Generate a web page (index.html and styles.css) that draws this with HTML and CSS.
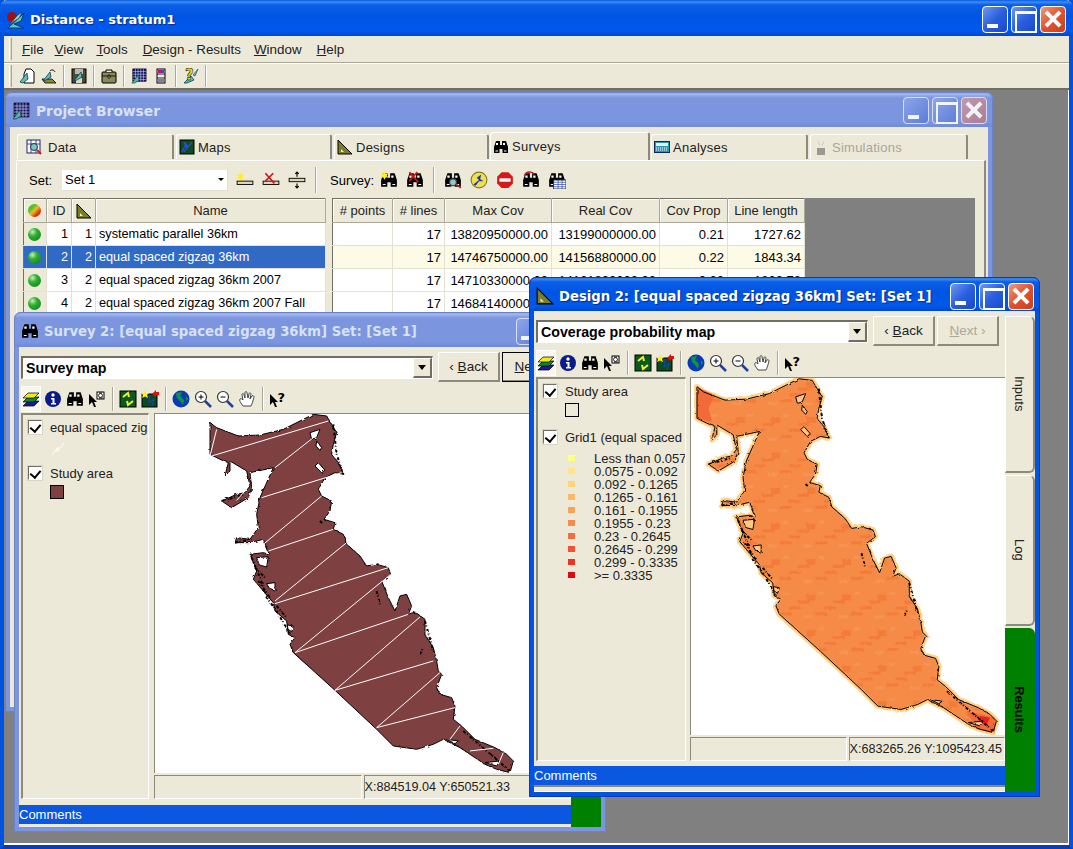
FILE: index.html
```html
<!DOCTYPE html>
<html lang="en">
<head>
    <meta charset="UTF-8">
    <title>Distance - stratum1</title>
    <link rel="stylesheet" href="styles.css">
</head>
<body>
<!-- shared icons and the coast outline -->
<svg class="defs" xmlns="http://www.w3.org/2000/svg">
    <defs>
        <polygon id="coast" points="180,35 200,50 265,75 330,72 400,55 490,10 530,15 545,40 560,65 550,100 545,130 565,155 582,190 555,185 525,200 505,235 515,255 545,270 540,300 522,325 555,335 550,355 580,370 590,400 630,435 650,465 680,460 715,470 722,490 695,510 715,560 735,600 750,555 770,550 785,585 775,610 795,603 825,625 825,670 850,710 860,750 865,780 875,790 860,830 870,850 905,860 915,885 910,925 935,945 975,985 1035,1010 1070,1030 1090,1050 1080,1085 1040,1075 1005,1060 960,1030 930,1010 880,985 850,1000 800,1015 730,1005 680,955 555,838 430,725 420,700 435,680 415,670 410,630 375,600 370,575 340,540 310,505 320,480 300,430 340,425 358,430 340,385 300,395 255,395 260,380 300,385 325,350 320,310 330,260 370,170 300,185 305,230 295,260 245,290 215,270 260,250 285,245 300,225 290,180 240,150 240,180 225,195 235,155 210,145 180,130"/>
        <path id="coast-holes" d="M480 65L510 55L500 80L485 85ZM495 165L505 155L525 178L515 185ZM500 90L515 110L510 118L498 105ZM320 440L355 437L350 468L328 462ZM350 518L375 515L375 538L358 532ZM412 642L430 645L425 662L414 655ZM890 985L925 990L915 998ZM1005 1055L1050 1050L1040 1065Z"/>
        <path id="coast-rough" d="M305 440L330 500L350 560L380 600L420 670M315 470L345 500M325 510L360 560M380 585L410 620M215 270L285 250M255 395L305 385M550 40L560 130L580 190M825 630L850 720M940 960L1080 1080M510 330L520 340M680 540L690 580M810 730L820 710"/>
        <filter id="rough" x="-5%" y="-5%" width="110%" height="110%" color-interpolation-filters="sRGB">
            <feTurbulence type="fractalNoise" baseFrequency=".09" numOctaves="2" seed="3"/>
            <feDisplacementMap in="SourceGraphic" scale="9"/>
        </filter>
        <pattern id="heat" width="108" height="108" patternUnits="userSpaceOnUse">
            <rect width="108" height="108" fill="#f68a47"/>
            <rect x="0" y="72" width="36" height="9" fill="#f47c3a"/>
            <rect x="27" y="54" width="36" height="9" fill="#f47c3a"/>
            <rect x="54" y="36" width="36" height="9" fill="#f47c3a"/>
            <rect x="81" y="18" width="27" height="18" fill="#f47c3a"/>
            <rect x="9" y="9" width="18" height="9" fill="#f79455"/>
            <rect x="72" y="81" width="27" height="9" fill="#f79455"/>
        </pattern>
        <symbol id="i-tri" viewBox="0 0 16 16"><path d="M1 1L15 15H1Z" fill="#7d7d22" stroke="#000"/><path d="M4 10L7 13H4Z" fill="#ece9d8"/></symbol>
        <symbol id="i-bino" viewBox="0 0 16 16"><path d="M1 14V8L3 2H7V6H9V2H13L15 8V14H9.500V10H6.500V14Z" fill="#000"/><path d="M3 4H5V6H3ZM10 4H12V6H10ZM2.500 11.500H5V12.500H2.500ZM11 11.500H13.500V12.500H11Z" fill="#fff"/></symbol>
        <symbol id="i-logo" viewBox="0 0 20 20"><circle cx="6" cy="7" r="5" fill="#a01010"/><path d="M2 18L18 3L15 11L8 14L18 18Z" fill="#5fc7b9" stroke="#0a3a5c"/><path d="M3 15L12 5L16 2L13 8L7 12Z" fill="#9fe0d6" stroke="#0a3a5c" stroke-width=".6"/></symbol>
        <symbol id="i-grid" viewBox="0 0 18 18"><rect x="2" y="1" width="15" height="14" fill="#14146a" stroke="#000" stroke-width=".6"/><path d="M2 4H17M2 7H17M2 10H17M2 13H17M5 1V15M8 1V15M11 1V15M14 1V15" stroke="#e0e0f0" stroke-width=".6"/><path d="M1 17L8 8L9 14L4 17Z" fill="#4fb8a6" stroke="#103a44" stroke-width=".7"/></symbol>
        <symbol id="i-new" viewBox="0 0 16 16"><path d="M7 1H12L15 4V15H5V6Z" fill="#fff" stroke="#000"/><path d="M1 14L8 5L9 11L4 15Z" fill="#61bdae" stroke="#0a3a5c" stroke-width=".8"/></symbol>
        <symbol id="i-open" viewBox="0 0 16 16"><path d="M1 11H11L15 15H4Z" fill="#8a8a30" stroke="#000" stroke-width=".8"/><path d="M2 13L9 4L10 9L5 12Z" fill="#61bdae" stroke="#0a3a5c" stroke-width=".8"/><path d="M9 3C11 1 13 2 14 4" fill="none" stroke="#000"/></symbol>
        <symbol id="i-save" viewBox="0 0 16 16"><rect x="1" y="1" width="14" height="14" fill="#4a4a38" stroke="#000"/><rect x="4" y="1" width="8" height="5" fill="#b8b8a8"/><rect x="5" y="10" width="6" height="5" fill="#d8d8c8"/><path d="M3 13L10 4L11 9L6 12Z" fill="#61bdae" stroke="#0a3a5c" stroke-width=".7"/></symbol>
        <symbol id="i-case" viewBox="0 0 16 16"><rect x="1" y="4" width="14" height="11" rx="1" fill="#8a8a58" stroke="#000"/><path d="M5 4V2H11V4" fill="#ece9d8" stroke="#000"/><path d="M1 8H15M7 7H9V10H7Z" stroke="#000" stroke-width=".8" fill="#ece9d8"/></symbol>
        <symbol id="i-bar" viewBox="0 0 16 16"><rect x="4" y="1" width="8" height="14" fill="#e8e8e8" stroke="#000"/><rect x="5" y="2" width="3" height="3" fill="#c01070"/><rect x="8" y="2" width="3" height="3" fill="#5040c0"/><path d="M4 6H12M4 10H12" stroke="#000" stroke-width=".8"/><rect x="5" y="11" width="6" height="3" fill="#8080a0"/></symbol>
        <symbol id="i-help" viewBox="0 0 16 16"><path d="M1 15L8 8L11 12L4 15Z" fill="#61bdae" stroke="#0a3a5c" stroke-width=".8"/><path d="M15 1L12 8L10 7Z" fill="#61bdae" stroke="#0a3a5c" stroke-width=".6"/><text x="2" y="12" class="qmark">?</text></symbol>
        <symbol id="i-data" viewBox="0 0 16 16"><rect x="1" y="1" width="13" height="13" fill="#fff" stroke="#202080"/><path d="M1 5H14M5 1V14M10 1V14" stroke="#202080" stroke-width=".8"/><circle cx="8" cy="8" r="3.500" fill="#7fc8c0" stroke="#103a44"/><path d="M11 11L15 15" stroke="#c02020" stroke-width="2"/></symbol>
        <symbol id="i-maps" viewBox="0 0 16 16"><rect x="1" y="1" width="14" height="14" fill="#124a20" stroke="#000"/><path d="M3 13L7 5L9 8L13 3M5 3L8 9L5 13" stroke="#2a50e0" stroke-width="1.200" fill="none"/></symbol>
        <symbol id="i-analyses" viewBox="0 0 16 16"><rect x="0.500" y="2.500" width="15" height="11" fill="#2a9ab0" stroke="#0a2a60"/><rect x="2" y="4" width="12" height="3" fill="#e8f0f8"/><path d="M2 9H14M2 11H14" stroke="#fff" stroke-dasharray="1 1"/></symbol>
        <symbol id="i-sim" viewBox="0 0 16 16"><path d="M5 1L7 6H9L11 1L10 6H6Z" fill="#b8b8b0"/><rect x="5" y="6" width="6" height="3" fill="#e8e8e0"/><rect x="4" y="9" width="8" height="7" fill="#9a9a92"/></symbol>
        <symbol id="i-setnew" viewBox="0 0 16 16"><path d="M4 1L5 3.500L7.500 3L6 5L7.500 7L5 6.500L4 9L3 6.500L.5 7L2 5L.5 3L3 3.500Z" fill="#ffef20"/><rect x="1" y="9" width="14" height="3" fill="#d8d8b8" stroke="#000" stroke-width=".8"/></symbol>
        <symbol id="i-setdel" viewBox="0 0 16 16"><rect x="1" y="9" width="14" height="3" fill="#d8d8b8" stroke="#000" stroke-width=".8"/><path d="M3 2L11 11M10 2L3 9" stroke="#d01818" stroke-width="1.500"/></symbol>
        <symbol id="i-setmove" viewBox="0 0 16 16"><rect x="1" y="6.500" width="14" height="3" fill="#d8d8b8" stroke="#000" stroke-width=".8"/><path d="M8 5V1M6.500 2.500L8 1L9.500 2.500M8 11V15M6.500 13.500L8 15L9.500 13.500" stroke="#000" fill="none"/></symbol>
        <symbol id="i-binonew" viewBox="0 0 16 16"><use href="#i-bino"/><path d="M4 0L5 2.500L7.500 2L6 4L7.500 6L5 5.500L4 8L3 5.500L.5 6L2 4L.5 2L3 2.500Z" fill="#ffef20"/></symbol>
        <symbol id="i-binodel" viewBox="0 0 16 16"><use href="#i-bino"/><path d="M3 1L11 10M10 1L3 9" stroke="#d01818" stroke-width="1.500"/></symbol>
        <symbol id="i-binozoom" viewBox="0 0 16 16"><use href="#i-bino"/><circle cx="8" cy="10" r="3" fill="#8fc8d0" stroke="#444"/><path d="M11 12L15 15" stroke="#c02020" stroke-width="1.500"/></symbol>
        <symbol id="i-run" viewBox="0 0 16 16"><circle cx="8" cy="8" r="7" fill="#eee050" stroke="#808020"/><path d="M3 12L8 8L6 6L10 3L9 7L12 9L8 9L5 13" fill="#2030c0"/></symbol>
        <symbol id="i-stop" viewBox="0 0 16 16"><path d="M5 1H11L15 5V11L11 15H5L1 11V5Z" fill="#d81818"/><rect x="3" y="6.500" width="10" height="3" fill="#fff"/></symbol>
        <symbol id="i-binoback" viewBox="0 0 16 16"><use href="#i-bino"/><path d="M2 4C4 0 9 0 11 3" fill="none" stroke="#c02020" stroke-width="1.200"/></symbol>
        <symbol id="i-binotable" viewBox="0 0 16 16"><use href="#i-bino"/><rect x="5" y="8" width="11" height="8" fill="#fff" stroke="#202060" stroke-width=".8"/><path d="M5 10H16M5 12H16M5 14H16M9 8V16M12.500 8V16" stroke="#2040a0" stroke-width=".6"/></symbol>
        <symbol id="i-layers" viewBox="0 0 18 18"><path d="M6 11H17L12 16H1Z" fill="#1818a0" stroke="#000" stroke-width=".7"/><path d="M6 7H17L12 12H1Z" fill="#0a8a20" stroke="#000" stroke-width=".7"/><path d="M6 3H17L12 8H1Z" fill="#f2e818" stroke="#000" stroke-width=".7"/></symbol>
        <symbol id="i-info" viewBox="0 0 18 18"><circle cx="9" cy="9" r="8" fill="#0a1a8a"/><circle cx="9" cy="5" r="1.700" fill="#fff"/><path d="M7 8H10.500V13H12V14.500H7V13H8.500V9.500H7Z" fill="#fff"/></symbol>
        <symbol id="i-ptr" viewBox="0 0 18 18"><path d="M1 4L9 12H6L8 17L6 17L4 12L1 15Z" fill="#000"/><rect x="9" y="2" width="7" height="7" fill="#fff" stroke="#000"/><path d="M11 3H14M11 8H15" stroke="#000" stroke-width=".8"/><circle cx="12.500" cy="5.500" r="2" fill="none" stroke="#000" stroke-width=".8"/></symbol>
        <symbol id="i-recycle" viewBox="0 0 18 18"><rect x="1" y="1" width="16" height="16" fill="#0a5a20" stroke="#000"/><path d="M4 7L9 3L10 7M14 11L9 15L8 11" fill="none" stroke="#f2ee30" stroke-width="2"/></symbol>
        <symbol id="i-stars" viewBox="0 0 18 18"><rect x="1" y="4" width="15" height="13" fill="#0a4a20" stroke="#000"/><path d="M5 9L9 5L8 13L13 9L11 16" stroke="#2040c0" fill="none"/><path d="M4 0L5 3L8 3L6 5L7 8L4 6.500L1 8L2 5L0 3L3 3Z" fill="#ffef20"/><path d="M11 4L15 0V2H18V5H15V7Z" fill="#e01010"/></symbol>
        <symbol id="i-globe" viewBox="0 0 18 18"><circle cx="9" cy="9" r="8.500" fill="#0a3ab8"/><path d="M4 3L10 2L8 6L12 10L11 15L8 11L5 8Z" fill="#0a9a38"/><path d="M14 6L16 9L14 11Z" fill="#0a9a38"/></symbol>
        <symbol id="i-zoomin" viewBox="0 0 18 18"><path d="M11 11L17 17" stroke="#2040a0" stroke-width="2.500"/><circle cx="7" cy="7" r="5.500" fill="#fff" stroke="#333" stroke-width="1.200"/><path d="M4.500 7H9.500M7 4.500V9.500" stroke="#000"/></symbol>
        <symbol id="i-zoomout" viewBox="0 0 18 18"><path d="M11 11L17 17" stroke="#2040a0" stroke-width="2.500"/><circle cx="7" cy="7" r="5.500" fill="#fff" stroke="#333" stroke-width="1.200"/><path d="M4.500 7H9.500" stroke="#000"/></symbol>
        <symbol id="i-hand" viewBox="0 0 18 18"><path d="M5 16C3 13 1 11 2 9C3 8 4 9 5 10L4 5C4 3 6 3 6 5L7 8L7 3C7 1 9 1 9 3L10 8L11 4C11 2 13 3 13 4L12 9L14 6C15 5 16 6 16 7C15 11 14 14 13 16Z" fill="#fff" stroke="#333" stroke-width=".9"/></symbol>
        <symbol id="i-whatsthis" viewBox="0 0 18 18"><path d="M1 4L9 12H6L8 17L6 17L4 12L1 15Z" fill="#000"/><text x="8.500" y="12" class="qmark-dark">?</text></symbol>
    </defs>
</svg>

<div class="app">
    <div class="titlebar app-title">
        <svg class="ico-logo"><use href="#i-logo"/></svg>
        <span class="title-text">Distance - stratum1</span>
        <div class="win-btns">
            <span class="wbtn wbtn-min"></span><span class="wbtn wbtn-max"></span><span class="wbtn wbtn-close"></span>
        </div>
    </div>
    <div class="menubar">
        <span class="grip"></span>
        <span class="menu-item menu-file"><u>F</u>ile</span>
        <span class="menu-item menu-view"><u>V</u>iew</span>
        <span class="menu-item menu-tools"><u>T</u>ools</span>
        <span class="menu-item menu-design"><u>D</u>esign - Results</span>
        <span class="menu-item menu-window"><u>W</u>indow</span>
        <span class="menu-item"><u>H</u>elp</span>
    </div>
    <div class="app-toolbar">
        <span class="grip"></span>
        <svg class="ico"><use href="#i-new"/></svg>
        <svg class="ico"><use href="#i-open"/></svg>
        <span class="sep"></span>
        <svg class="ico"><use href="#i-save"/></svg>
        <span class="sep"></span>
        <svg class="ico"><use href="#i-case"/></svg>
        <span class="sep"></span>
        <svg class="ico"><use href="#i-grid"/></svg>
        <svg class="ico"><use href="#i-bar"/></svg>
        <span class="sep"></span>
        <svg class="ico"><use href="#i-help"/></svg>
        <span class="sep"></span>
    </div>

    <div class="mdi">
        <!-- Project browser -->
        <div class="win win-inactive win-browser">
            <div class="titlebar">
                <svg class="ico-title"><use href="#i-grid"/></svg>
                <span class="title-text">Project Browser</span>
                <div class="win-btns">
                    <span class="wbtn wbtn-min"></span><span class="wbtn wbtn-max"></span><span class="wbtn wbtn-close"></span>
                </div>
            </div>
            <div class="browser-body">
                <div class="tabs">
                    <div class="tab tab-data"><svg class="ico"><use href="#i-data"/></svg>Data</div>
                    <div class="tab tab-maps"><svg class="ico"><use href="#i-maps"/></svg>Maps</div>
                    <div class="tab tab-designs"><svg class="ico"><use href="#i-tri"/></svg>Designs</div>
                    <div class="tab tab-active"><svg class="ico"><use href="#i-bino"/></svg>Surveys</div>
                    <div class="tab"><svg class="ico"><use href="#i-analyses"/></svg>Analyses</div>
                    <div class="tab tab-disabled"><svg class="ico"><use href="#i-sim"/></svg>Simulations</div>
                </div>
                <div class="tab-panel">
                    <div class="set-toolbar">
                        <span class="set-label">Set:</span>
                        <div class="set-combo">Set 1<span class="set-arrow"></span></div>
                        <svg class="ico"><use href="#i-setnew"/></svg>
                        <svg class="ico"><use href="#i-setdel"/></svg>
                        <svg class="ico"><use href="#i-setmove"/></svg>
                        <span class="sep"></span>
                        <span class="survey-label">Survey:</span>
                        <svg class="ico"><use href="#i-binonew"/></svg>
                        <svg class="ico"><use href="#i-binodel"/></svg>
                        <span class="sep"></span>
                        <svg class="ico"><use href="#i-binozoom"/></svg>
                        <svg class="ico"><use href="#i-run"/></svg>
                        <svg class="ico"><use href="#i-stop"/></svg>
                        <svg class="ico"><use href="#i-binoback"/></svg>
                        <svg class="ico"><use href="#i-binotable"/></svg>
                    </div>
                    <div class="grids">
                        <table class="grid grid-left">
                            <colgroup><col class="c-status"><col class="c-id"><col class="c-tri"><col class="c-name"></colgroup>
                            <tr>
                                <th><span class="dot dot-multi"></span></th><th>ID</th><th><svg class="ico"><use href="#i-tri"/></svg></th><th>Name</th>
                            </tr>
                            <tr><td class="hd"><span class="dot"></span></td><td class="num">1</td><td class="num">1</td><td>systematic parallel 36km</td></tr>
                            <tr class="sel"><td class="hd"><span class="dot"></span></td><td class="num">2</td><td class="num">2</td><td>equal spaced zigzag 36km</td></tr>
                            <tr><td class="hd"><span class="dot"></span></td><td class="num">3</td><td class="num">2</td><td>equal spaced zigzag 36km 2007</td></tr>
                            <tr><td class="hd"><span class="dot"></span></td><td class="num">4</td><td class="num">2</td><td>equal spaced zigzag 36km 2007 Fall</td></tr>
                        </table>
                        <table class="grid grid-right">
                            <colgroup><col class="c-points"><col class="c-lines"><col class="c-max"><col class="c-real"><col class="c-prop"><col class="c-len"></colgroup>
                            <tr><th># points</th><th># lines</th><th>Max Cov</th><th>Real Cov</th><th>Cov Prop</th><th>Line length</th></tr>
                            <tr><td></td><td class="num">17</td><td class="num">13820950000.00</td><td class="num">13199000000.00</td><td class="num">0.21</td><td class="num">1727.62</td></tr>
                            <tr class="cur"><td></td><td class="num">17</td><td class="num">14746750000.00</td><td class="num">14156880000.00</td><td class="num">0.22</td><td class="num">1843.34</td></tr>
                            <tr><td></td><td class="num">17</td><td class="num">14710330000.00</td><td class="num">14161800000.00</td><td class="num">0.22</td><td class="num">1833.78</td></tr>
                            <tr><td></td><td class="num">17</td><td class="num">14684140000.00</td><td></td><td></td><td></td></tr>
                        </table>
                    </div>
                </div>
            </div>
        </div>

        <!-- Survey window -->
        <div class="win win-inactive win-survey">
            <div class="titlebar">
                <svg class="ico-title"><use href="#i-bino"/></svg>
                <span class="title-text">Survey 2: [equal spaced zigzag 36km] Set: [Set 1]</span>
                <div class="win-btns">
                    <span class="wbtn wbtn-min"></span><span class="wbtn wbtn-max"></span><span class="wbtn wbtn-close"></span>
                </div>
            </div>
            <div class="win-body">
                <div class="pane">
                    <div class="combo-row">
                        <div class="combo">Survey map<span class="combo-arrow"></span></div>
                        <span class="btn">&#8249; <u>B</u>ack</span>
                        <span class="btn btn-default"><u>N</u>ext &#8250;</span>
                    </div>
                    <div class="map-toolbar">
                        <span class="tool tool-on"><svg class="ico"><use href="#i-layers"/></svg></span>
                        <span class="tool"><svg class="ico"><use href="#i-info"/></svg></span>
                        <span class="tool"><svg class="ico"><use href="#i-bino"/></svg></span>
                        <span class="tool"><svg class="ico"><use href="#i-ptr"/></svg></span>
                        <span class="sep"></span>
                        <span class="tool"><svg class="ico"><use href="#i-recycle"/></svg></span>
                        <span class="tool"><svg class="ico"><use href="#i-stars"/></svg></span>
                        <span class="sep"></span>
                        <span class="tool"><svg class="ico"><use href="#i-globe"/></svg></span>
                        <span class="tool"><svg class="ico"><use href="#i-zoomin"/></svg></span>
                        <span class="tool"><svg class="ico"><use href="#i-zoomout"/></svg></span>
                        <span class="tool"><svg class="ico"><use href="#i-hand"/></svg></span>
                        <span class="sep"></span>
                        <span class="tool"><svg class="ico"><use href="#i-whatsthis"/></svg></span>
                    </div>
                    <div class="map-main">
                        <div class="legend legend-survey">
                            <div class="layer"><span class="check"></span><span class="layer-name">equal spaced zigzag 36km</span></div>
                            <svg class="line-key" viewBox="0 0 14 14"><path d="M1 13L7 5L6 10L13 1" fill="none" stroke="#fff"/></svg>
                            <div class="layer layer-next"><span class="check"></span><span class="layer-name">Study area</span></div>
                            <span class="swatch-box swatch-brown"></span>
                        </div>
                        <div class="map-col">
                            <div class="map">
                                <svg class="map-svg" xmlns="http://www.w3.org/2000/svg">
                                    <g transform="translate(-5 -3) scale(.3333)">
                                        <use href="#coast" fill="#7e4040" stroke="#000" stroke-width="3" filter="url(#rough)"/>
                                        <use href="#coast-holes" fill="#fff" stroke="#000" stroke-width="3" filter="url(#rough)"/>
                                        <use href="#coast-rough" fill="none" stroke="#000" stroke-width="6" stroke-dasharray="9 5 3 8" filter="url(#rough)"/>
                                        <path d="M180 135L200 55M185 135L535 30M490 80L375 170M335 260L575 185M515 255L340 400M355 420L550 355M590 395L375 570M375 578L715 470M722 490L435 725M435 725L775 610M810 618L555 838M555 838L850 750M870 785L680 950M680 950L915 890M930 945L900 985M960 1020L1030 1012M1060 1025L1045 1060M285 240L260 268" fill="none" stroke="#fff" stroke-width="3"/>
                                    </g>
                                </svg>
                            </div>
                            <div class="status"><span class="status-cell"></span><span class="status-cell">X:884519.04 Y:650521.33</span></div>
                        </div>
                    </div>
                    <div class="comments">Comments</div>
                </div>
                <div class="side-tabs">
                    <div class="side-tab side-inputs"><span>Inputs</span></div>
                    <div class="side-tab side-log"><span>Log</span></div>
                    <div class="side-tab side-results"><span>Results</span></div>
                </div>
            </div>
        </div>

        <!-- Design window -->
        <div class="win win-design">
            <div class="titlebar">
                <svg class="ico-title"><use href="#i-tri"/></svg>
                <span class="title-text">Design 2: [equal spaced zigzag 36km] Set: [Set 1]</span>
                <div class="win-btns">
                    <span class="wbtn wbtn-min"></span><span class="wbtn wbtn-max"></span><span class="wbtn wbtn-close"></span>
                </div>
            </div>
            <div class="win-body">
                <div class="pane">
                    <div class="combo-row">
                        <div class="combo">Coverage probability map<span class="combo-arrow"></span></div>
                        <span class="btn">&#8249; <u>B</u>ack</span>
                        <span class="btn btn-off"><u>N</u>ext &#8250;</span>
                    </div>
                    <div class="map-toolbar">
                        <span class="tool tool-on"><svg class="ico"><use href="#i-layers"/></svg></span>
                        <span class="tool"><svg class="ico"><use href="#i-info"/></svg></span>
                        <span class="tool"><svg class="ico"><use href="#i-bino"/></svg></span>
                        <span class="tool"><svg class="ico"><use href="#i-ptr"/></svg></span>
                        <span class="sep"></span>
                        <span class="tool"><svg class="ico"><use href="#i-recycle"/></svg></span>
                        <span class="tool"><svg class="ico"><use href="#i-stars"/></svg></span>
                        <span class="sep"></span>
                        <span class="tool"><svg class="ico"><use href="#i-globe"/></svg></span>
                        <span class="tool"><svg class="ico"><use href="#i-zoomin"/></svg></span>
                        <span class="tool"><svg class="ico"><use href="#i-zoomout"/></svg></span>
                        <span class="tool"><svg class="ico"><use href="#i-hand"/></svg></span>
                        <span class="sep"></span>
                        <span class="tool"><svg class="ico"><use href="#i-whatsthis"/></svg></span>
                    </div>
                    <div class="map-main">
                        <div class="legend legend-design">
                            <div class="layer"><span class="check"></span><span class="layer-name">Study area</span></div>
                            <span class="swatch-box"></span>
                            <div class="layer layer-next"><span class="check"></span><span class="layer-name">Grid1 (equal spaced zigzag)</span></div>
                            <ul class="classes">
                                <li><i class="k1"></i>Less than 0.0575</li>
                                <li><i class="k2"></i>0.0575 - 0.092</li>
                                <li><i class="k3"></i>0.092 - 0.1265</li>
                                <li><i class="k4"></i>0.1265 - 0.161</li>
                                <li><i class="k5"></i>0.161 - 0.1955</li>
                                <li><i class="k6"></i>0.1955 - 0.23</li>
                                <li><i class="k7"></i>0.23 - 0.2645</li>
                                <li><i class="k8"></i>0.2645 - 0.299</li>
                                <li><i class="k9"></i>0.299 - 0.3335</li>
                                <li><i class="k10"></i>&gt;= 0.3335</li>
                            </ul>
                        </div>
                        <div class="map-col">
                            <div class="map">
                                <svg class="map-svg" xmlns="http://www.w3.org/2000/svg">
                                    <g transform="translate(-53.2 -2.5) scale(.329)">
                                        <use href="#coast" fill="#fcd68c" stroke="#fcd68c" stroke-width="18" stroke-linejoin="round" filter="url(#rough)"/>
                                        <use href="#coast" fill="url(#heat)" stroke="#f8a868" stroke-width="6" stroke-linejoin="round" filter="url(#rough)"/>
                                        <path d="M180 35L235 60L215 100L225 140L180 130Z" fill="#f2693a"/>
                                        <path d="M1000 1020L1085 1040L1085 1085L1030 1075Z" fill="#f2693a"/>
                                        <path d="M1040 1035L1070 1040L1060 1065L1040 1055Z" fill="#ea2018"/>
                                        <use href="#coast-holes" fill="#fcc884" stroke="#000" stroke-width="3" filter="url(#rough)"/>
                                        <use href="#coast-rough" fill="none" stroke="#000" stroke-width="6" stroke-dasharray="9 5 3 8" filter="url(#rough)"/>
                                        <use href="#coast" fill="none" stroke="#000" stroke-width="3" filter="url(#rough)"/>
                                    </g>
                                </svg>
                            </div>
                            <div class="status"><span class="status-cell"></span><span class="status-cell">X:683265.26 Y:1095423.45</span></div>
                        </div>
                    </div>
                    <div class="comments">Comments</div>
                </div>
                <div class="side-tabs">
                    <div class="side-tab side-inputs"><span>Inputs</span></div>
                    <div class="side-tab side-log"><span>Log</span></div>
                    <div class="side-tab side-results"><span>Results</span></div>
                </div>
            </div>
        </div>
    </div>
</div>
</body>
</html>
```

FILE: styles.css
```css
* {
    box-sizing: border-box;
}

body {
    margin: 0;
    background-color: #808080;
    font-family: "Liberation Sans", Arial, sans-serif;
    font-size: 13px;
    color: #000;
    overflow: hidden;
}

.defs {
    position: absolute;
    width: 0;
    height: 0;
}

.qmark {
    font: bold 15px "DejaVu Sans", sans-serif;
    fill: #f2e010;
    stroke: #000;
    stroke-width: .5px;
}

.qmark-dark {
    font: bold 13px "DejaVu Sans", sans-serif;
    fill: #000;
}

/* main window */
.app {
    width: 1073px;
    height: 849px;
    display: flex;
    flex-direction: column;
    background-color: #ece9d8;
    border-left: 4px solid #0053e0;
    border-right: 4px solid #0053e0;
    border-bottom: 4px solid #0a3cb8;
}

.titlebar {
    display: flex;
    align-items: center;
    flex: none;
    height: 34px;
    margin: 0 -5px;
    padding: 4px 6px 0 7px;
    border-radius: 7px 7px 0 0;
    background: linear-gradient(#0a5ae0 0, #3c8cf2 2px, #0a5ee6 5px, #0054e3 45%, #0059ec 85%, #0047d0 100%);
    color: #fff;
}

.app-title {
    height: 36px;
    margin: 0 -4px;
    padding: 3px 7px 0 6px;
}

.title-text {
    font: bold 13.200px "DejaVu Sans", sans-serif;
    margin-left: 5px;
    white-space: nowrap;
    text-shadow: 1px 1px 1px #0a2a90;
}

.app-title .title-text {
    font-size: 13px;
    margin-left: 4px;
}

.ico-logo {
    width: 20px;
    height: 20px;
}

.ico-title {
    width: 18px;
    height: 18px;
    flex: none;
}

.win-btns {
    display: flex;
    gap: 3px;
    margin-left: auto;
}

.wbtn {
    position: relative;
    display: block;
    width: 26px;
    height: 27px;
    border: 1px solid #fff;
    border-radius: 4px;
    background: linear-gradient(135deg, #6f98f0, #2a5fe0 50%, #1a48c8);
}

.wbtn-min::after {
    content: "";
    position: absolute;
    left: 4px;
    bottom: 4px;
    width: 11px;
    height: 4px;
    background-color: #fff;
}

.wbtn-max::after {
    content: "";
    position: absolute;
    left: 3px;
    top: 4px;
    width: 18px;
    height: 17px;
    border: 2px solid #fff;
    border-top-width: 3px;
}

.wbtn-close {
    background: linear-gradient(135deg, #f09a80, #e2512c 50%, #c8401c);
}

.wbtn-close::before,
.wbtn-close::after {
    content: "";
    position: absolute;
    left: 2px;
    top: 10px;
    width: 20px;
    height: 4px;
    background-color: #fff;
    transform: rotate(45deg);
}

.wbtn-close::after {
    transform: rotate(-45deg);
}

.menubar {
    display: flex;
    align-items: center;
    flex: none;
    height: 27px;
    font-size: 13.400px;
    border-bottom: 1px solid #aca899;
    color: #222;
}

.menubar .grip {
    margin-left: 5px;
}

.menu-file { margin-left: 10px; margin-right: 11px; }
.menu-view { margin-right: 13px; }
.menu-tools { margin-right: 15px; }
.menu-design { margin-right: 13px; }
.menu-window { margin-right: 15px; }

.grip {
    flex: none;
    width: 3px;
    height: 22px;
    border-left: 1px solid #fff;
    border-right: 1px solid #aca899;
    background-color: #d8d5c4;
}

.app-toolbar {
    display: flex;
    align-items: center;
    flex: none;
    height: 27px;
    padding-left: 5px;
    gap: 6px;
    border-top: 1px solid #fff;
    border-bottom: 2px solid #716f64;
}

.app-toolbar .grip {
    margin-right: 1px;
}

.app-toolbar .sep {
    margin: 0;
}

.ico {
    display: block;
    width: 16px;
    height: 16px;
    flex: none;
}

.sep {
    flex: none;
    width: 2px;
    height: 22px;
    margin: 0 1px;
    border-left: 1px solid #aca899;
    border-right: 1px solid #fff;
}

.mdi {
    position: relative;
    flex: 1;
    overflow: hidden;
    background-color: #808080;
    border-right: 1px solid #fff;
    border-bottom: 2px solid #fff;
}

/* child windows */
.win {
    position: absolute;
    display: flex;
    flex-direction: column;
    background-color: #ece9d8;
    border: 5px solid #0054e3;
    border-top: 0;
    border-radius: 7px 7px 0 0;
    outline: 1px solid #0a3cb8;
    outline-offset: -1px;
}

.win-inactive {
    border-color: #7b96df;
    outline-color: #6a82c8;
}

.win-inactive .titlebar {
    background: linear-gradient(#7f9ae0 0, #a3b8ee 2px, #7b96df 6px, #7b96df 85%, #6f8ad8 100%);
    color: #d8e1f8;
}

.win-inactive .title-text {
    text-shadow: none;
}

.win-inactive .wbtn {
    opacity: .9;
    border-color: #dfe6f8;
    background: linear-gradient(135deg, #8fa8ea, #5a7ad8);
}

.win-inactive .wbtn-close {
    background: linear-gradient(135deg, #c89aa8, #b47a8c);
}

.win-browser {
    left: 1px;
    top: 2px;
    width: 988px;
    height: 620px;
}

.win-browser .titlebar {
    height: 35px;
    padding-top: 2px;
}

.win-browser .title-text {
    font-size: 13.800px;
    margin-left: 6px;
}

.win-survey {
    left: 10px;
    top: 222px;
    width: 592px;
    height: 520px;
}

.win-design {
    left: 525px;
    top: 187px;
    width: 511px;
    height: 520px;
}

.win-survey .titlebar {
    height: 35px;
    padding-top: 3px;
}

.win-body {
    flex: 1;
    display: flex;
    min-height: 0;
}

/* project browser */
.browser-body {
    flex: 1;
    padding: 7px 3px 0 6px;
    min-height: 0;
    display: flex;
    flex-direction: column;
}

.tabs {
    display: flex;
    flex: none;
    height: 26px;
    padding-left: 1px;
    gap: 2px;
}

.tab {
    display: flex;
    align-items: center;
    gap: 3px;
    width: 157px;
    height: 25px;
    padding-left: 2px;
    letter-spacing: .25px;
    border-top: 1px solid #fff;
    border-left: 1px solid #fff;
    border-right: 2px solid #8c8a7c;
    border-radius: 3px 3px 0 0;
    color: #222;
}

.tab-data {
    gap: 6px;
    padding-left: 8px;
}

.tab-maps { width: 156px; }
.tab-designs { width: 155px; }

.tab-active {
    width: 160px;
    height: 28px;
    margin: -2px -1px 0 -1px;
    padding-left: 2px;
    background-color: #ece9d8;
    position: relative;
    z-index: 1;
}

.tab-disabled {
    width: 158px;
    color: #a8a69a;
}

.tab-panel {
    flex: 1;
    width: 970px;
    min-height: 0;
    padding: 5px 9px 0 6px;
    border-top: 1px solid #fff;
    border-left: 1px solid #fff;
    border-right: 2px solid #8c8a7c;
    display: flex;
    flex-direction: column;
}

.set-toolbar {
    display: flex;
    align-items: center;
    flex: none;
    height: 32px;
    gap: 8px;
    padding: 0 0 4px 6px;
}

.set-toolbar .ico {
    width: 18px;
    height: 18px;
}

.set-toolbar .sep {
    height: 26px;
}

.set-label {
    width: 25px;
}

.set-combo {
    display: flex;
    align-items: center;
    width: 166px;
    height: 21px;
    padding-left: 3px;
    background-color: #fff;
    border-right: 1px solid #e4e1d0;
    border-bottom: 1px solid #e4e1d0;
}

.set-arrow {
    margin-left: auto;
    margin-right: 3px;
    width: 0;
    height: 0;
    border-left: 3px solid transparent;
    border-right: 3px solid transparent;
    border-top: 3px solid #000;
}

.survey-label {
    width: 42px;
    margin-left: 4px;
}

.grids {
    flex: 1;
    display: flex;
    align-items: flex-start;
    gap: 6px;
    min-height: 0;
    background: linear-gradient(90deg, #ece9d8 0, #ece9d8 309px, #808080 309px);
}

.grid {
    border-collapse: collapse;
    table-layout: fixed;
    background-color: #fff;
    border-top: 1px solid #716f64;
    border-left: 1px solid #716f64;
    font-size: 13px;
}

.grid-left { width: 303px; }
.grid-left td { font-size: 12.700px; }
.grid-right { width: 473px; }

.c-status { width: 23px; }
.c-id { width: 25px; }
.c-tri { width: 24px; }
.c-points { width: 60px; }
.c-lines { width: 52px; }
.c-max { width: 107px; }
.c-real { width: 108px; }
.c-prop { width: 68px; }

.grid tr {
    height: 23px;
}

.grid th {
    height: 24px;
    padding: 0;
    font-weight: normal;
    color: #222;
    background-color: #ece9d8;
    border-right: 1px solid #aca899;
    border-bottom: 1px solid #aca899;
    box-shadow: inset 1px 1px 0 #fff;
}

.grid th .ico {
    margin-left: 4px;
}

.grid td {
    padding: 0 3px;
    white-space: nowrap;
    overflow: hidden;
    border-right: 1px solid #e4e1d0;
    border-bottom: 1px solid #e4e1d0;
}

.grid td.num {
    text-align: right;
}

.grid td.hd {
    padding: 0 0 0 4px;
    background-color: #ece9d8;
}

.dot {
    display: block;
    width: 13px;
    height: 13px;
    border-radius: 50%;
    background: radial-gradient(circle at 35% 30%, #c8f0c0 0, #30b030 35%, #0a7a18 100%);
}

.dot-multi {
    margin-left: 4px;
    background: linear-gradient(135deg, #50c030 30%, #e8c020 50%, #d83018 75%);
}

.sel td,
.sel td.hd {
    color: #fff;
    background-color: #316ac5;
}

.cur td {
    background-color: #fdfbe6;
}

/* map windows */
.pane {
    flex: 1;
    min-width: 0;
    display: flex;
    flex-direction: column;
}

.pane::after {
    content: "";
    flex: none;
    height: 4px;
    border-top: 2px solid #8c8a7c;
    border-bottom: 1px solid #fff;
}

.combo-row {
    display: flex;
    align-items: flex-start;
    flex: none;
    height: 38px;
    padding: 5px 0 0 2px;
    gap: 5px;
}

.combo {
    display: flex;
    align-items: center;
    flex: none;
    height: 23px;
    margin-top: 4px;
    padding-left: 3px;
    background-color: #fff;
    font: bold 14.200px "Liberation Sans", Arial, sans-serif;
    border-top: 2px solid #716f64;
    border-left: 2px solid #716f64;
    border-right: 1px solid #fff;
    border-bottom: 1px solid #fff;
}

.win-survey .combo { width: 412px; }
.win-design .combo { width: 332px; }

.combo-arrow {
    position: relative;
    margin-left: auto;
    width: 19px;
    height: 20px;
    background-color: #ece9d8;
    border-right: 2px solid #716f64;
    border-bottom: 2px solid #716f64;
    border-top: 1px solid #fff;
    border-left: 1px solid #fff;
}

.combo-arrow::after {
    content: "";
    position: absolute;
    left: 4px;
    top: 6px;
    border-left: 4px solid transparent;
    border-right: 4px solid transparent;
    border-top: 5px solid #000;
}

.btn {
    display: block;
    flex: none;
    width: 62px;
    height: 30px;
    margin-right: -3px;
    font-size: 13.500px;
    line-height: 27px;
    text-align: center;
    color: #222;
    background-color: #ece9d8;
    border-top: 1px solid #fff;
    border-left: 1px solid #fff;
    border-right: 2px solid #8c8a7c;
    border-bottom: 2px solid #8c8a7c;
}

.btn-default {
    outline: 1px solid #000;
    outline-offset: -1px;
}

.btn-off {
    color: #aca899;
}

.map-toolbar {
    display: flex;
    align-items: center;
    flex: none;
    height: 28px;
    padding-left: 3px;
    gap: 4px;
}

.map-toolbar .sep {
    height: 24px;
    margin: 0 1px 0 2px;
}

.tool {
    display: flex;
    align-items: center;
    justify-content: center;
    width: 18px;
    height: 24px;
}

.tool .ico {
    width: 18px;
    height: 18px;
}

.tool-on {
    background-color: #f7f6ef;
    outline: 1px solid #fff;
}

.map-main {
    flex: 1;
    min-height: 0;
    display: flex;
    gap: 4px;
    padding-left: 2px;
}

.win-survey .map-main {
    gap: 5px;
}

.legend {
    flex: none;
    overflow: hidden;
    padding: 5px 0 0 5px;
    border-top: 2px solid #8c8a7c;
    border-left: 2px solid #8c8a7c;
    border-right: 1px solid #fff;
    border-bottom: 1px solid #fff;
}

.legend-survey { width: 128px; }
.legend-design { width: 150px; }

.layer {
    display: flex;
    align-items: center;
    gap: 8px;
    height: 14px;
    white-space: nowrap;
    color: #222;
}

.layer-next {
    margin-top: 13px;
}

.legend-survey .layer-next {
    margin-top: 10px;
}

.check {
    position: relative;
    flex: none;
    width: 14px;
    height: 14px;
    background-color: #fff;
    border-top: 1px solid #716f64;
    border-left: 1px solid #716f64;
    border-right: 1px solid #fff;
    border-bottom: 1px solid #fff;
    box-shadow: 0 0 0 1px #d8d5c4;
}

.check::after {
    content: "";
    position: absolute;
    left: 3px;
    top: 1px;
    width: 5px;
    height: 8px;
    border-right: 2px solid #000;
    border-bottom: 2px solid #000;
    transform: rotate(40deg);
}

.swatch-box {
    display: block;
    width: 14px;
    height: 14px;
    margin: 5px 0 0 22px;
    border: 1px solid #000;
}

.swatch-brown {
    background-color: #7e4040;
}

.line-key {
    display: block;
    width: 14px;
    height: 14px;
    margin: 8px 0 0 23px;
}

.classes {
    list-style: none;
    margin: 8px 0 0;
    padding: 0 0 0 51px;
    line-height: 13px;
    white-space: nowrap;
    color: #222;
}

.classes li {
    position: relative;
    height: 13px;
}

.classes i {
    position: absolute;
    left: -26px;
    top: 3px;
    width: 7px;
    height: 6px;
}

.k1 { background-color: #ffff80; }
.k2 { background-color: #ffe48a; }
.k3 { background-color: #ffd577; }
.k4 { background-color: #fbb96a; }
.k5 { background-color: #f9a35a; }
.k6 { background-color: #f78b4e; }
.k7 { background-color: #f56e3e; }
.k8 { background-color: #f1552f; }
.k9 { background-color: #ee3320; }
.k10 { background-color: #dd0b0b; }

.map-col {
    flex: 1;
    min-width: 0;
    display: flex;
    flex-direction: column;
}

.map {
    flex: 1;
    min-height: 0;
    background-color: #fff;
    border-top: 1px solid #8c8a7c;
    border-left: 1px solid #8c8a7c;
    overflow: hidden;
}

.map-svg {
    display: block;
    width: 100%;
    height: 100%;
}

.status {
    display: flex;
    flex: none;
    height: 26px;
    padding-top: 2px;
    gap: 2px;
}

.status-cell {
    flex: 1;
    min-width: 0;
    line-height: 23px;
    font-size: 12.600px;
    white-space: nowrap;
    overflow: hidden;
    color: #222;
    border-top: 1px solid #8c8a7c;
    border-left: 1px solid #8c8a7c;
    border-right: 1px solid #fff;
    border-bottom: 1px solid #fff;
}

.comments {
    flex: none;
    height: 19px;
    margin-top: 5px;
    line-height: 19px;
    color: #fff;
    background-color: #0a58e0;
}

.win-survey .comments {
    margin-top: 6px;
}

.win-survey .pane::after {
    height: 3px;
    border-top: 0;
    border-bottom: 0;
}

.side-tabs {
    flex: none;
    display: flex;
    flex-direction: column;
    width: 30px;
    padding-top: 5px;
    gap: 2px;
}

.side-tab {
    display: flex;
    align-items: center;
    justify-content: center;
    width: 100%;
    border-top: 1px solid #fff;
    border-left: 1px solid #fff;
    border-right: 2px solid #8c8a7c;
    border-bottom: 2px solid #8c8a7c;
    border-radius: 0 6px 6px 0;
    color: #222;
}

.side-tab span {
    writing-mode: vertical-rl;
}

.side-inputs { height: 157px; }
.side-log { height: 151px; }

.side-results {
    flex: 1;
    font-weight: bold;
    color: #000;
    background-color: #008000;
    border-color: #008000;
    border-radius: 0 6px 0 0;
}
```
